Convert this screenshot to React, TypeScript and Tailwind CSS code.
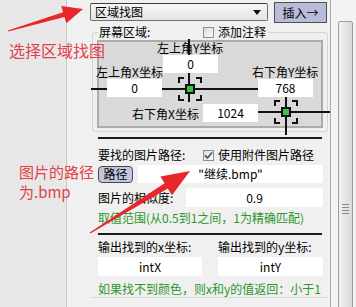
import React from 'react';

const Crosshair = ({ className }: { className: string }) => (
  <div className={`absolute w-[24px] h-[24px] ${className}`}>
    <div className="absolute left-0 top-0 w-[6px] h-[6px] border-l-2 border-t-2 border-[#111]" />
    <div className="absolute right-0 top-0 w-[6px] h-[6px] border-r-2 border-t-2 border-[#111]" />
    <div className="absolute left-0 bottom-0 w-[6px] h-[6px] border-l-2 border-b-2 border-[#111]" />
    <div className="absolute right-0 bottom-0 w-[6px] h-[6px] border-r-2 border-b-2 border-[#111]" />
    <div className="absolute left-[7px] top-[7px] w-[10px] h-[10px] border-2 border-[#111] bg-[#3cc23c]" />
  </div>
);

const Field = ({ className, children }: { className: string; children?: React.ReactNode }) => (
  <div className={`absolute h-[18px] bg-white flex items-center justify-center text-[12px] leading-[14px] ${className}`}>
    {children}
  </div>
);

const CheckBox = ({ checked }: { checked?: boolean }) => (
  <div className="w-[11px] h-[11px] border border-[#8e8f8f] bg-gradient-to-br from-[#dcdcdc] to-[#fbfbfb] flex items-center justify-center shrink-0">
    {checked && (
      <svg width="9" height="9" viewBox="0 0 9 9">
        <polyline points="1,4.5 3.5,7 8,1.5" fill="none" stroke="#4a5a78" strokeWidth="1.8" />
      </svg>
    )}
  </div>
);

export default function App() {
  return (
    <div className="relative w-[356px] h-[307px] overflow-hidden flex bg-[#e8e8e8] text-black font-['Noto_Sans_CJK_SC',sans-serif]">
      {/* left strip */}
      <div className="w-[67px] shrink-0 bg-[#e7e7e7] border-r border-[#c9c9c9]" />

      {/* panel */}
      <div className="w-[264px] shrink-0 bg-[#f0f0f0] flex flex-col border-r border-[#a9a9a9]">
        {/* top row */}
        <div className="flex items-start pt-[2px] h-[23px]">
          <div className="ml-[23px] mt-[1px] w-[178px] h-[18px] rounded-[2px] border border-[#707070] border-t-[#3a3a3a] bg-gradient-to-b from-[#f6f6f6] to-[#e4e4e4] flex items-center pl-[4px] pr-[6px] text-[12px] leading-[14px]">
            <span className="flex-1">区域找图</span>
            <svg width="8" height="5" viewBox="0 0 8 5">
              <polygon points="0,0 8,0 4,5" fill="#111" />
            </svg>
          </div>
          <div className="ml-[6px] w-[53px] h-[21px] border border-[#505050] bg-[#b8bcd8] flex items-center justify-center text-[12px] leading-[14px]">
            插入→
          </div>
        </div>

        {/* group header */}
        <div className="relative z-10 flex items-center mt-[2px] h-[14px] text-[12px] leading-[14px]">
          <span className="ml-[31px] w-[105px] bg-[#f0f0f0] pl-[1px]">屏幕区域:</span>
          <div className="flex items-center gap-[4px] bg-[#f0f0f0] pr-[2px]">
            <CheckBox />
            <span>添加注释</span>
          </div>
        </div>

        {/* group frame */}
        <div className="-mt-[7px] ml-[25px] w-[236px] border border-[#d4d4d4] rounded-[3px] pl-[4px] pt-[7px] pb-[3px]">
          <div className="relative w-[226px] h-[88px] border-2 border-[#acacac] bg-[#d9d9d9] text-[12px] leading-[13px]">
            {/* lines */}
            <div className="absolute left-[89px] -top-[9px] w-[2px] h-[69px] bg-[#111]" />
            <div className="absolute -left-[8px] top-[46px] w-[167px] h-[2px] bg-[#111]" />
            <div className="absolute left-[158px] top-[69px] w-[73px] h-[2px] bg-[#111]" />
            <div className="absolute left-[186px] top-[55px] w-[2px] h-[38px] bg-[#111]" />

            <span className="absolute left-[58px] -top-[1px] whitespace-nowrap">左上角Y坐标</span>
            <Field className="left-[64px] top-[13px] w-[55px]">0</Field>

            <span className="absolute -left-[3px] top-[23px] whitespace-nowrap">左上角X坐标</span>
            <Field className="left-[8px] top-[37px] w-[55px]">0</Field>

            <span className="absolute left-[153px] top-[23px] whitespace-nowrap">右下角Y坐标</span>
            <Field className="left-[159px] top-[37px] w-[55px]">768</Field>

            <span className="absolute left-[33px] top-[65px] whitespace-nowrap">右下角X坐标</span>
            <Field className="left-[104px] top-[62px] w-[55px]">1024</Field>

            <Crosshair className="left-[79px] top-[35px]" />
            <Crosshair className="left-[175px] top-[58px]" />
          </div>
        </div>

        <div className="mt-[5px] ml-[31px] w-[224px] h-[2px] bg-[#1a1a1a]" />

        {/* image section */}
        <div className="ml-[31px] w-[225px] flex flex-col text-[12px] leading-[14px]">
          <div className="mt-[9px] h-[14px] flex items-center">
            <span className="w-[105px]">要找的图片路径:</span>
            <CheckBox checked />
            <span className="ml-[4px]">使用附件图片路径</span>
          </div>
          <div className="mt-[3px] h-[18px] flex items-center">
            <div className="w-[35px] h-[17px] rounded-[4px] border border-[#4a4a4a] bg-[#c2c5de] flex items-center justify-center">
              路径
            </div>
            <div className="ml-[5px] w-[185px] h-[18px] bg-white flex items-center justify-center">
              "继续.bmp"
            </div>
          </div>
          <div className="mt-[5px] h-[19px] flex items-center justify-between">
            <span>图片的相似度:</span>
            <div className="w-[137px] h-[19px] bg-white flex items-center justify-center">0.9</div>
          </div>
          <div className="mt-[4px] h-[14px] text-[#2c962c] whitespace-nowrap">
            取值范围(从0.5到1之间，1为精确匹配)
          </div>
          <div className="mt-[8px] w-[224px] h-[2px] bg-[#1a1a1a]" />
          <div className="mt-[5px] h-[14px] flex">
            <span className="w-[120px]">输出找到的x坐标:</span>
            <span>输出找到的y坐标:</span>
          </div>
          <div className="mt-[3px] h-[19px] flex">
            <div className="w-[104px] h-[19px] bg-white flex items-center justify-center">intX</div>
            <div className="ml-[16px] w-[105px] h-[19px] bg-white flex items-center justify-center">intY</div>
          </div>
          <div className="mt-[6px] h-[14px] text-[#2c962c] whitespace-nowrap">
            如果找不到颜色，则x和y的值返回：小于1
          </div>
        </div>
        <div className="mt-[1px] ml-[24px] w-[236px] h-px bg-[#d8d8d8]" />
      </div>

      {/* scrollbar */}
      <div className="flex-1 bg-[#f3f3f3] flex">
        <div className="ml-[7px] mt-[21px] w-[15px] h-[400px] rounded-[2px] border border-[#9e9e9e] bg-gradient-to-r from-[#f2f2f2] to-[#d9d9d9] flex flex-col items-center">
          <div className="mt-[182px] flex flex-col gap-[2px]">
            <div className="w-[7px] h-px bg-[#8a8a8a]" />
            <div className="w-[7px] h-px bg-[#8a8a8a]" />
            <div className="w-[7px] h-px bg-[#8a8a8a]" />
            <div className="w-[7px] h-px bg-[#8a8a8a]" />
          </div>
        </div>
      </div>

      {/* red annotations */}
      <div className="absolute left-[9px] top-[41px] text-[16px] leading-[18px] text-[#e2404a] whitespace-nowrap pointer-events-none">
        选择区域找图
      </div>
      <div className="absolute left-[19px] top-[162px] text-[15px] leading-[20px] text-[#e2404a] pointer-events-none">
        <div className="h-[20px]">图片的路径</div>
        <div className="h-[20px]">为.bmp</div>
      </div>
      <svg className="absolute left-0 top-0 pointer-events-none" width="356" height="307" viewBox="0 0 356 307">
        <polygon
          points="8.1,31.5 64.5,17 66.3,23.2 83,9 61.3,6 63.1,12.2 7.9,30.5"
          fill="#e8262b"
        />
        <polygon
          points="90.3,233.5 167.8,188.4 172,195.2 190,171 160.4,176.5 164.6,183.2 89.7,232.5"
          fill="#e8262b"
        />
      </svg>
    </div>
  );
}
